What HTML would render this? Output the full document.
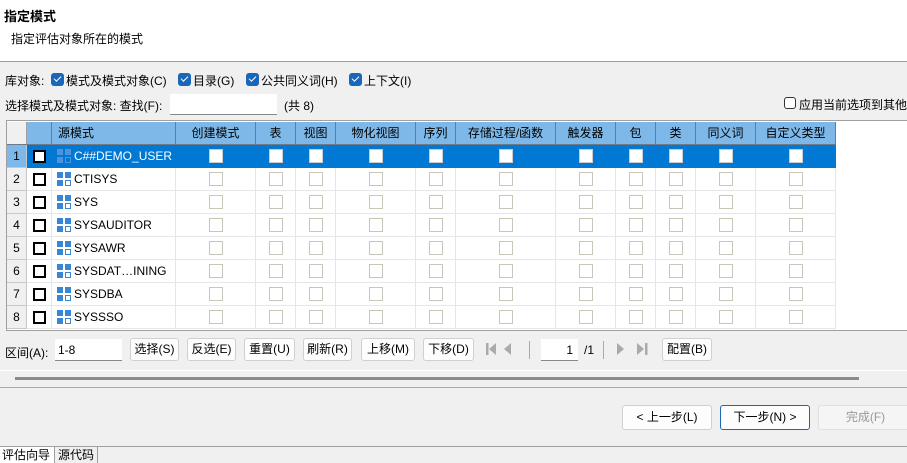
<!DOCTYPE html>
<html><head><meta charset="utf-8"><style>
*{margin:0;padding:0;box-sizing:border-box}
body{width:907px;height:463px;overflow:hidden;background:#f0f0f0;font-family:"Liberation Sans","Noto Sans CJK SC",sans-serif;font-size:12px;color:#000;position:relative}
.a{position:absolute;white-space:nowrap}
.cb{position:absolute;width:13px;height:13px;border-radius:3px;background:#1a66b8}
.cb:after{content:"";position:absolute;left:3px;top:3px;width:6px;height:3px;border-left:1.5px solid #fff;border-bottom:1.5px solid #fff;transform:rotate(-45deg)}
.btn{position:absolute;height:23px;border:1px solid #d0d0d0;border-radius:3px;background:#fdfdfd;text-align:center;line-height:21px;font-size:12px}
.cell{position:absolute;height:23px;border-right:1px solid #e6e6e6;border-bottom:1px solid #e6e6e6;line-height:22px}
.hd{position:absolute;top:122px;height:23px;background:#7db8e8;border-right:1px solid #6f7a86;text-align:center;line-height:22px}
.sq{position:absolute;width:14px;height:14px;border:1px solid #c8c6b8;background:#fff}
.bk{position:absolute;width:13px;height:13px;border:2px solid #000;background:#fff}
</style></head><body>
<div class="a" style="left:0;top:0;width:907px;height:62px;background:#fff;border-bottom:1px solid #a0a0a0"></div>
<div class="a" style="left:4px;top:6px;font-weight:bold;font-size:13px">指定模式</div>
<div class="a" style="left:11px;top:30px">指定评估对象所在的模式</div>

<div class="a" style="left:5px;top:72px">库对象:</div>
<div class="cb" style="left:51px;top:73px"></div><div class="a" style="left:66px;top:72px">模式及模式对象(C)</div>
<div class="cb" style="left:178px;top:73px"></div><div class="a" style="left:193px;top:72px">目录(G)</div>
<div class="cb" style="left:246px;top:73px"></div><div class="a" style="left:261px;top:72px">公共同义词(H)</div>
<div class="cb" style="left:349px;top:73px"></div><div class="a" style="left:364px;top:72px">上下文(I)</div>
<div class="a" style="left:5px;top:97px">选择模式及模式对象: 查找(F):</div>
<div class="a" style="left:170px;top:94px;width:107px;height:21px;background:#fff;border-bottom:1px solid #888"></div>
<div class="a" style="left:284px;top:97px">(共 8)</div>
<div class="a" style="left:784px;top:97px;width:12px;height:12px;border:1px solid #333;border-radius:3px;background:#fff"></div>
<div class="a" style="left:799px;top:96px">应用当前选项到其他</div>

<div class="a" style="left:6px;top:120px;width:901px;height:211px;background:#fff;border:1px solid #a0a0a0;border-right:none"></div>
<div class="hd" style="left:7px;width:20px;background:#f0f0f0;border-color:#a0a0a0"></div>
<div class="hd" style="left:27px;width:25px"></div>
<div class="hd" style="left:52px;width:124px;text-align:left;padding-left:6px">源模式</div>
<div class="hd" style="left:176px;width:80px">创建模式</div>
<div class="hd" style="left:256px;width:40px">表</div>
<div class="hd" style="left:296px;width:40px">视图</div>
<div class="hd" style="left:336px;width:80px">物化视图</div>
<div class="hd" style="left:416px;width:40px">序列</div>
<div class="hd" style="left:456px;width:100px">存储过程/函数</div>
<div class="hd" style="left:556px;width:60px">触发器</div>
<div class="hd" style="left:616px;width:40px">包</div>
<div class="hd" style="left:656px;width:40px">类</div>
<div class="hd" style="left:696px;width:60px">同义词</div>
<div class="hd" style="left:756px;width:80px">自定义类型</div>
<div class="a" style="left:7px;top:144px;width:829px;height:1px;background:#6f7a86"></div>
<div class="a" style="left:7px;top:145px;width:829px;height:23px;background:#0078d4"></div>

<div id="rows"></div>
<script>
var names=["C##DEMO_USER","CTISYS","SYS","SYSAUDITOR","SYSAWR","SYSDAT…INING","SYSDBA","SYSSSO"];
var cols=[[176,80],[256,40],[296,40],[336,80],[416,40],[456,100],[556,60],[616,40],[656,40],[696,60],[756,80]];
var h="";
for(var i=0;i<8;i++){var t=145+23*i,sel=i==0;
h+='<div class="cell" style="left:7px;top:'+t+'px;width:20px;text-align:center;background:'+(sel?'#7db8e8':'#f0f0f0')+';border-color:#c8c8c8">'+(i+1)+'</div>';
h+='<div class="cell" style="left:27px;top:'+t+'px;width:25px;'+(sel?'border-color:#0078d4':'')+'"></div><div class="bk" style="left:33px;top:'+(t+5)+'px"></div>';
h+='<div class="cell" style="left:52px;top:'+t+'px;width:124px;padding-left:22px;'+(sel?'color:#fff;border-color:#0078d4':'')+'">'+names[i]+'</div>';
var c=sel?'#4d94dc':'#3a86d6';
h+='<svg class="a" style="left:57px;top:'+(t+4)+'px" width="15" height="15"><rect x="0" y="0" width="6" height="6" fill="'+c+'"/><rect x="8" y="0" width="6" height="6" fill="'+c+'"/><rect x="0" y="8" width="6" height="6" fill="'+c+'"/><rect x="8.5" y="8.5" width="5" height="5" fill="none" stroke="'+c+'"/></svg>';
for(var j=0;j<cols.length;j++){var x=cols[j][0],w=cols[j][1];
h+='<div class="cell" style="left:'+x+'px;top:'+t+'px;width:'+w+'px;'+(sel?'border-color:#0078d4':'')+'"></div>';
h+='<div class="sq" style="left:'+(x+w/2-7)+'px;top:'+(t+4)+'px;'+(sel?'border-color:#ccc':'')+'"></div>';}
}
document.getElementById("rows").innerHTML=h;
</script>

<div class="a" style="left:5px;top:344px">区间(A):</div>
<div class="a" style="left:55px;top:339px;width:67px;height:22px;background:#fff;border-bottom:1px solid #888;padding:4px 3px">1-8</div>
<div class="btn" style="left:130px;top:338px;width:49px">选择(S)</div>
<div class="btn" style="left:187px;top:338px;width:49px">反选(E)</div>
<div class="btn" style="left:244px;top:338px;width:51px">重置(U)</div>
<div class="btn" style="left:303px;top:338px;width:49px">刷新(R)</div>
<div class="btn" style="left:361px;top:338px;width:54px">上移(M)</div>
<div class="btn" style="left:423px;top:338px;width:51px">下移(D)</div>
<svg class="a" style="left:484px;top:342px" width="40" height="14"><rect x="2" y="1" width="2.5" height="12" fill="#aaa"/><path d="M12 1L5 7L12 13Z" fill="#aaa"/><path d="M27 1L20 7L27 13Z" fill="#aaa"/></svg>
<div class="a" style="left:529px;top:341px;width:1px;height:18px;background:#aaa"></div>
<div class="a" style="left:541px;top:339px;width:37px;height:22px;background:#fff;border-bottom:1px solid #888;text-align:right;padding:4px 5px">1</div>
<div class="a" style="left:584px;top:343px">/1</div>
<div class="a" style="left:603px;top:341px;width:1px;height:18px;background:#aaa"></div>
<svg class="a" style="left:614px;top:342px" width="40" height="14"><path d="M3 1L10 7L3 13Z" fill="#aaa"/><path d="M23 1L30 7L23 13Z" fill="#aaa"/><rect x="31" y="1" width="2.5" height="12" fill="#aaa"/></svg>
<div class="btn" style="left:662px;top:338px;width:50px">配置(B)</div>

<div class="a" style="left:0;top:370px;width:907px;height:1px;background:#fff"></div>
<div class="a" style="left:15px;top:377px;width:844px;height:3px;background:#8a8a8a"></div>
<div class="a" style="left:0;top:387px;width:907px;height:1px;background:#a8a8a8"></div>
<div class="btn" style="left:622px;top:405px;width:90px;height:25px;line-height:23px">&lt; 上一步(L)</div>
<div class="btn" style="left:720px;top:405px;width:90px;height:25px;line-height:23px;border-color:#1a66b8">下一步(N) &gt;</div>
<div class="btn" style="left:818px;top:405px;width:95px;height:25px;line-height:23px;color:#999;background:#f5f5f5;border-color:#e0e0e0">完成(F)</div>
<div class="a" style="left:0;top:446px;width:907px;height:1px;background:#a0a0a0"></div>
<div class="a" style="left:0;top:447px;width:54px;height:16px;background:#fff;padding-left:2px;line-height:16px">评估向导</div>
<div class="a" style="left:54px;top:447px;width:44px;height:16px;border-left:1px solid #a0a0a0;border-right:1px solid #a0a0a0;padding-left:3px;line-height:16px">源代码</div>
</body></html>
